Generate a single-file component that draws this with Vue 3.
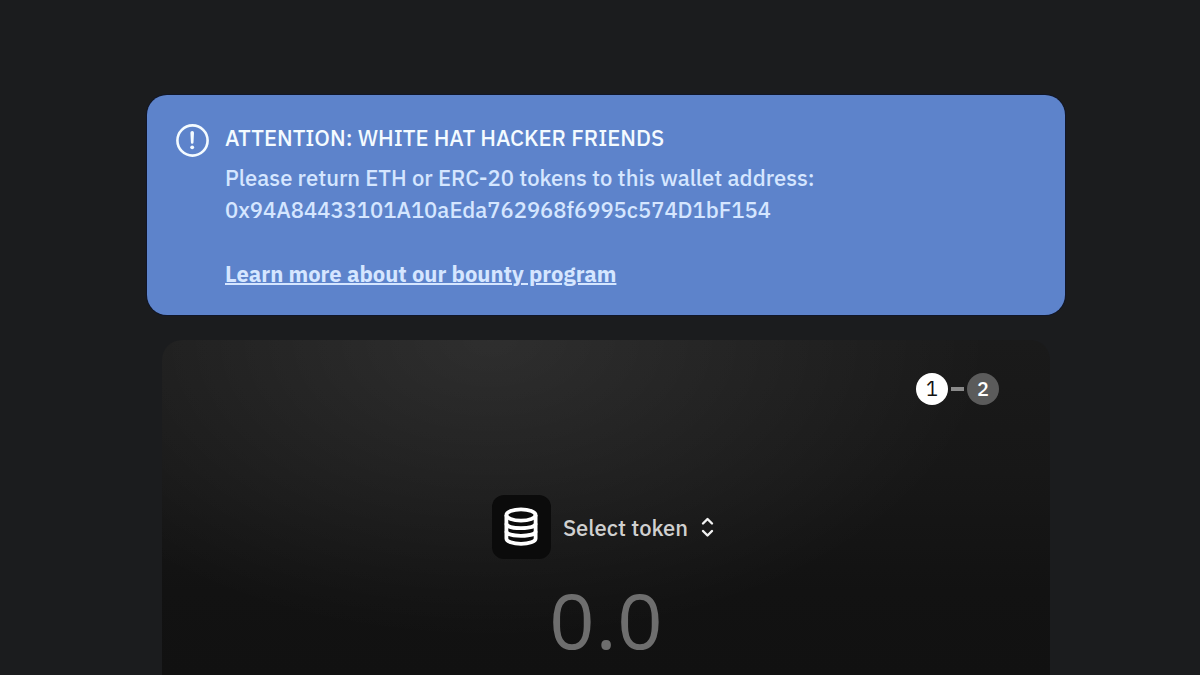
<script setup>
import { ref } from 'vue'

const amount = ref('')
const steps = [1, 2]
const current = 1
</script>

<template>
  <main class="page">
    <section class="notice">
      <svg class="notice-icon" viewBox="0 0 33 33" aria-hidden="true">
        <circle cx="16.5" cy="16.5" r="15.1" fill="none" stroke="currentColor" stroke-width="2.6" />
        <path d="M14.4 8.8a1.8 1.8 0 0 1 3.6 0l-.5 9.6a1.3 1.3 0 0 1-2.6 0z" fill="currentColor" />
        <circle cx="16.2" cy="23.3" r="1.9" fill="currentColor" />
      </svg>
      <div class="notice-body">
        <h1>ATTENTION: WHITE HAT HACKER FRIENDS</h1>
        <p>Please return ETH or ERC-20 tokens to this wallet address:</p>
        <p>0x94A84433101A10aEda762968f6995c574D1bF154</p>
        <a href="#bounty">Learn more about our bounty program</a>
      </div>
    </section>

    <section class="card">
      <ol class="steps">
        <li v-for="step in steps" :key="step" :class="{ active: step === current }">
          <span>{{ step }}</span>
        </li>
      </ol>
      <button class="token" type="button">
        <span class="token-icon">
          <svg viewBox="0 0 36 40" fill="none" stroke="currentColor" stroke-width="3.8" aria-hidden="true">
            <ellipse cx="18" cy="8" rx="14.6" ry="5.6" />
            <path d="M3.4 8v23.6c0 3 6.5 5.2 14.6 5.2s14.6-2.2 14.6-5.2V8" />
            <path d="M3.4 16.6c0 3 6.5 4.6 14.6 4.6s14.6-1.6 14.6-4.6" />
            <path d="M3.4 24.2c0 3 6.5 4.6 14.6 4.6s14.6-1.6 14.6-4.6" />
          </svg>
        </span>
        <span class="token-label">Select token</span>
        <svg class="chevrons" viewBox="0 0 24 24" fill="none" stroke="currentColor" stroke-width="2.4" stroke-linecap="round" stroke-linejoin="round" aria-hidden="true">
          <path d="M7 8.5L11.500 4l4.500 4.500M7 16l4.500 4.500L16 16" />
        </svg>
      </button>
      <input v-model="amount" class="amount" type="text" inputmode="decimal" placeholder="0.0" aria-label="Amount" />
    </section>
  </main>
</template>

<style>
body {
  background: #1b1c1e;
}
</style>

<style scoped>
.page {
  box-sizing: border-box;
  min-height: 100vh;
  padding: 95px 135px 0 147px;
  display: flex;
  flex-direction: column;
  gap: 25px;
  font-family: "IBM Plex Sans", "Noto Sans", sans-serif;
  font-size: 22px;
  font-weight: 500;
  line-height: 32px;
  background: #1b1c1e;
}

.notice {
  display: flex;
  gap: 16px;
  padding: 27px 29px 25px;
  border-radius: 20px;
  background: #5d83cb;
  color: #d5e6ff;
  box-shadow: 0 0 0 1px #10162a;
}

.notice-icon {
  flex: none;
  width: 33px;
  height: 33px;
  margin-top: 2px;
  color: #f4fbff;
}

.notice h1 {
  margin: 0 0 8px;
  font-size: 22px;
  font-weight: 500;
  color: #f4fbff;
}

.notice p {
  margin: 0;
  overflow-wrap: anywhere;
}

.notice a {
  display: inline-block;
  margin-top: 32px;
  color: inherit;
  font-weight: 700;
  text-decoration-thickness: 2px;
}

.card {
  flex: 1;
  display: flex;
  flex-direction: column;
  align-items: center;
  margin: 0 15px;
  padding-top: 33px;
  border-radius: 20px 20px 0 0;
  background:
    radial-gradient(ellipse 500px 300px at 37% 0, rgba(255, 255, 255, 0.09), transparent),
    linear-gradient(#1a1a1a, #171717 40%, #121212 75%, #111);
}

.steps {
  align-self: flex-end;
  display: flex;
  margin: 0 51px 90px 0;
  padding: 0;
  list-style: none;
}

.steps li {
  display: flex;
  align-items: center;
}

.steps li + li::before {
  content: "";
  width: 13px;
  height: 4px;
  margin: 0 3px;
  background: #8a8a8a;
}

.steps span {
  width: 32px;
  border-radius: 50%;
  background: #5b5b5b;
  color: #fff;
  font-size: 20px;
  text-align: center;
}

.steps .active span {
  background: #fff;
  color: #111;
  font-weight: 400;
}

.token {
  display: flex;
  align-items: center;
  margin: 0 0 13px;
  padding: 0;
  border: 0;
  background: none;
  color: #d0d0d0;
  font: inherit;
  cursor: pointer;
}

.token-icon {
  display: flex;
  align-items: center;
  justify-content: center;
  width: 59px;
  height: 64px;
  margin-right: 12px;
  border-radius: 12px;
  background: #0b0b0b;
  color: #fff;
}

.token-icon svg {
  width: 36px;
  height: 40px;
}

.token-label {
  padding-top: 2px;
}

.chevrons {
  width: 24px;
  height: 24px;
  margin-left: 8px;
  color: #f2f2f2;
}

.amount {
  box-sizing: border-box;
  width: 100%;
  height: 96px;
  padding: 0;
  border: 0;
  outline: none;
  background: none;
  color: #fff;
  font: inherit;
  font-size: 78px;
  font-weight: 400;
  line-height: 96px;
  text-align: center;
}

.amount::placeholder {
  color: #6e6e6e;
  opacity: 1;
}
</style>
